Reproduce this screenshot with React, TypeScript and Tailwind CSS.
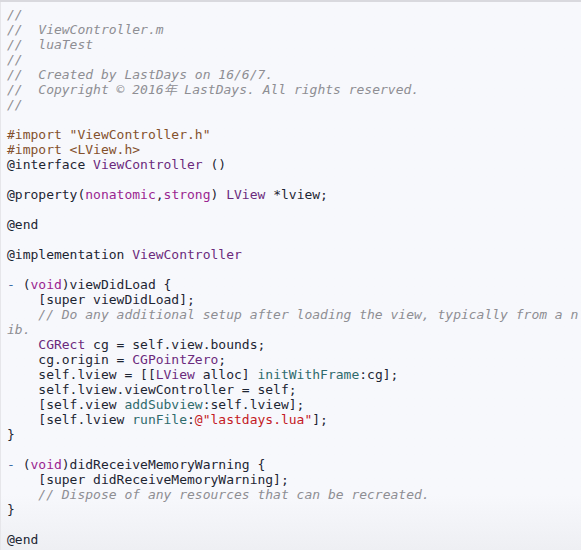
type Tok = [string, string?];

const c = {
  cm: "text-[#8e8e93] italic",
  pp: "text-[#84512d]",
  kw: "text-[#9a2590]",
  ty: "text-[#6b2a7c]",
  fn: "text-[#2f6b6c]",
  st: "text-[#c41a24]",
  dash: "text-[#3d6fa8]",
};

const lines: Tok[][] = [
  [["//", c.cm]],
  [["//  ViewController.m", c.cm]],
  [["//  luaTest", c.cm]],
  [["//", c.cm]],
  [["//  Created by LastDays on 16/6/7.", c.cm]],
  [["//  Copyright © 2016年 LastDays. All rights reserved.", c.cm]],
  [["//", c.cm]],
  [],
  [['#import "ViewController.h"', c.pp]],
  [["#import <LView.h>", c.pp]],
  [["@interface "], ["ViewController", c.ty], [" ()"]],
  [],
  [["@property("], ["nonatomic", c.kw], [","], ["strong", c.kw], [") "], ["LView", c.ty], [" *lview;"]],
  [],
  [["@end"]],
  [],
  [["@implementation "], ["ViewController", c.ty]],
  [],
  [["-", c.dash], [" ("], ["void", c.kw], [")viewDidLoad {"]],
  [["    [super viewDidLoad];"]],
  [["    "], ["// Do any additional setup after loading the view, typically from a n", c.cm]],
  [["ib.", c.cm]],
  [["    "], ["CGRect", c.ty], [" cg = self.view.bounds;"]],
  [["    cg.origin = "], ["CGPointZero", c.ty], [";"]],
  [["    self.lview = [["], ["LView", c.ty], [" alloc] "], ["initWithFrame", c.fn], [":cg];"]],
  [["    self.lview.viewController = self;"]],
  [["    [self.view "], ["addSubview", c.fn], [":self.lview];"]],
  [["    [self.lview "], ["runFile", c.fn], [":"], ['@"lastdays.lua"', c.st], ["];"]],
  [["}"]],
  [],
  [["-", c.dash], [" ("], ["void", c.kw], [")didReceiveMemoryWarning {"]],
  [["    [super didReceiveMemoryWarning];"]],
  [["    "], ["// Dispose of any resources that can be recreated.", c.cm]],
  [["}"]],
  [],
  [["@end"]],
];

export default function App() {
  return (
    <div className="w-[581px] h-[550px] overflow-hidden bg-gradient-to-b from-[#f7f8fc] from-90% to-[#eeeff3] border-t-2 border-[#d9d9de]">
      <div className="h-full border-l border-[#e6e6ea] pl-[6px] pt-[5px] font-['DejaVu_Sans_Mono','Liberation_Mono',monospace] text-[13px] leading-[15px] text-[#1d2533]">
        {lines.map((line, i) => (
          <div key={i} className="h-[15px] whitespace-pre">
            {line.map(([text, cls], j) => (
              <span key={j} className={cls}>
                {text}
              </span>
            ))}
          </div>
        ))}
      </div>
    </div>
  );
}
